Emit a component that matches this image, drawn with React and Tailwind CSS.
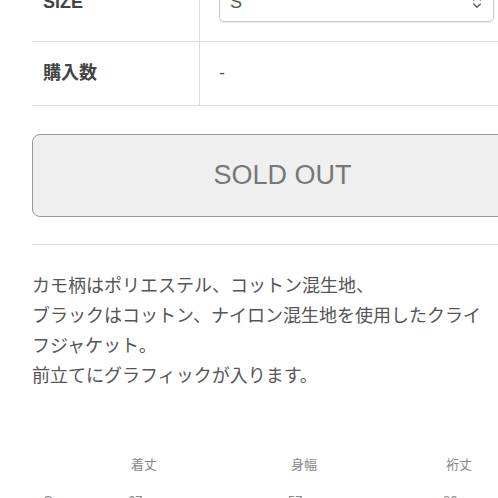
import React from "react";
import { ChevronsUpDown } from "lucide-react";

const font = { fontFamily: '"Liberation Sans", "Noto Sans CJK JP", sans-serif' };

function SizeTable() {
  const rows = [["S", "67cm", "57cm", "80cm"]];
  return (
    <div className="grid grid-cols-[32px_160px_160px_150px] text-[13px] text-[#888] text-center">
      <div className="h-[36px] flex items-center justify-center"></div>
      <div className="h-[36px] flex items-center justify-center">着丈</div>
      <div className="h-[36px] flex items-center justify-center">身幅</div>
      <div className="h-[36px] flex items-center justify-center">裄丈</div>
      {rows.map((r) =>
        r.map((c, i) => (
          <div key={i} className="h-[36px] flex items-center justify-center">
            {c}
          </div>
        ))
      )}
    </div>
  );
}

export default function App() {
  return (
    <div className="w-[498px] h-[498px] overflow-hidden bg-white" style={font}>
      <div className="ml-[32px] w-[500px] -mt-[37px]">
        {/* option table */}
        <div className="flex h-[79px] border-b border-[#ddd]">
          <div className="w-[168px] border-r border-[#ddd] flex items-center pl-[11px] pt-[1px] text-[18px] font-bold text-[#444]">
            SIZE
          </div>
          <div className="flex-1 flex items-center pl-[19px] pr-[38px]">
            <div className="w-full h-[40px] rounded-[5px] border border-[#ccc] shadow-[0_1px_1px_rgba(0,0,0,0.08)] flex items-center justify-between pl-[10px] pr-[8px] text-[18px] text-[#555]">
              <span>S</span>
              <ChevronsUpDown size={16} strokeWidth={2} className="text-[#555]" />
            </div>
          </div>
        </div>
        <div className="flex h-[64px] border-b border-[#ddd]">
          <div className="w-[168px] border-r border-[#ddd] flex items-center pl-[11px] text-[18px] font-bold text-[#444]">
            購入数
          </div>
          <div className="flex-1 flex items-center pl-[19px] text-[18px] text-[#555]">-</div>
        </div>

        {/* sold out */}
        <div className="pt-[28px] pb-[27px] border-b border-[#ddd]">
          <button className="w-full h-[83px] rounded-[8px] border border-[#999] bg-[#efefef] text-[27px] text-[#777] flex items-center justify-center pl-[1px]">
            SOLD OUT
          </button>
        </div>

        {/* description */}
        <div className="pt-[26px] text-[18px] leading-[30px] text-[#555] whitespace-nowrap">
          カモ柄はポリエステル、コットン混生地、
          <br />
          ブラックはコットン、ナイロン混生地を使用したクライ
          <br />
          フジャケット。
          <br />
          前立てにグラフィックが入ります。
        </div>

        <div className="pt-[56px]">
          <SizeTable />
        </div>
      </div>
    </div>
  );
}
